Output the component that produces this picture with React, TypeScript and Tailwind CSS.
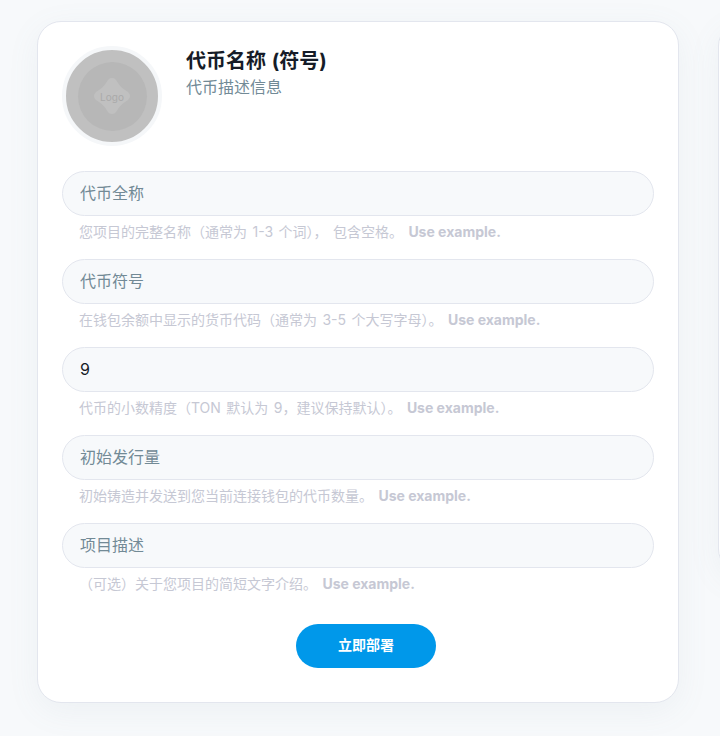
const fields = [
  { ph: "代币全称", hint: "您项目的完整名称（通常为 1-3 个词）， 包含空格。", value: "" },
  { ph: "代币符号", hint: "在钱包余额中显示的货币代码（通常为 3-5 个大写字母）。", value: "" },
  { ph: "", hint: "代币的小数精度（TON 默认为 9，建议保持默认）。", value: "9" },
  { ph: "初始发行量", hint: "初始铸造并发送到您当前连接钱包的代币数量。", value: "" },
  { ph: "项目描述", hint: "（可选）关于您项目的简短文字介绍。", value: "" },
];

const font = { fontFamily: '"Inter", "Noto Sans CJK SC", sans-serif' };

export default function App() {
  return (
    <div className="relative h-[736px] w-[720px] overflow-hidden bg-[#f7f9fb] pl-[37px] pt-[21px]" style={font}>
      <div className="absolute left-[718px] top-[22px] h-[551px] w-[100px] rounded-[24px] border border-[#e3e6ee] bg-white shadow-[0_8px_32px_rgba(114,138,150,0.08)]" />
      <div className="w-[642px] rounded-[24px] border border-[#e3e6ee] bg-white px-[24px] pb-[34px] pt-[24px] shadow-[0_8px_32px_rgba(114,138,150,0.08)]">
        <div className="flex h-[125px] items-start">
          <div className="flex h-[100px] w-[100px] shrink-0 items-center justify-center rounded-full border-[4px] border-[#f5f7f9] bg-[#c0c0c0]">
            <div className="flex h-[69px] w-[69px] items-center justify-center rounded-full bg-[#b7b7b7]">
              <div className="relative flex h-[36px] w-[36px] items-center justify-center pt-[2px]">
                <svg className="absolute inset-0" viewBox="0 0 36 36" width="36" height="36">
                  <path d="M18 0C20.5 0 22 1.8 23 3.5Q26.5 9.5 32.5 13C34.2 14 36 15.5 36 18C36 20.5 34.2 22 32.5 23Q26.5 26.5 23 32.5C22 34.2 20.5 36 18 36C15.5 36 14 34.2 13 32.5Q9.5 26.5 3.5 23C1.8 22 0 20.5 0 18C0 15.5 1.8 14 3.5 13Q9.5 9.5 13 3.5C14 1.8 15.5 0 18 0Z" fill="#c0c0c0" />
                </svg>
                <span className="relative text-[10px] leading-none text-[#aaaaaa]">Logo</span>
              </div>
            </div>
          </div>
          <div className="ml-[24px] pt-[2px]">
            <div className="text-[20px] font-bold leading-[26px] text-[#161c28] [word-spacing:1px]">代币名称 (符号)</div>
            <div className="mt-[1px] text-[16px] leading-[24px] text-[#728a96]">代币描述信息</div>
          </div>
        </div>
        <div className="flex flex-col gap-[12px]">
          {fields.map((f) => (
            <div key={f.hint}>
              <input
                readOnly
                value={f.value}
                placeholder={f.ph}
                className="block h-[45px] w-full rounded-[23px] border border-[#e3e6ee] bg-[#f7f9fb] px-[17px] pb-[1px] text-[16px] text-[#161c28] outline-none placeholder:text-[#728a96]"
              />
              <p className="mt-[6px] h-[25px] pl-[17px] text-[14px] leading-[20px] text-[#c6c8d4] [word-spacing:1.5px]">
                {f.hint} <b className="font-bold [word-spacing:0]">Use example.</b>
              </p>
            </div>
          ))}
        </div>
        <div className="mt-[25px] flex justify-center pl-[16px]">
          <button className="h-[44px] w-[140px] rounded-[22px] bg-[#0098ea] pb-[3px] text-[14px] font-bold text-white">立即部署</button>
        </div>
      </div>
    </div>
  );
}
